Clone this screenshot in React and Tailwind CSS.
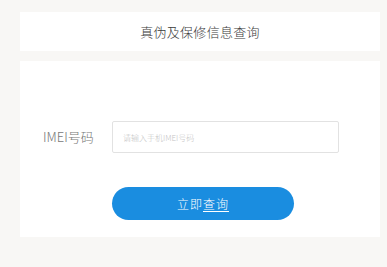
import React, { useState } from 'react';

const App = () => {
    const [imei, setImei] = useState('');

    return (
        <div
            className="w-[387px] h-[267px] bg-[#f8f7f5] pt-[12px] pl-[20px] pr-[7px] font-light"
            style={{ fontFamily: '"Noto Sans CJK SC", "Liberation Sans", sans-serif' }}
        >
            <header className="h-[39px] bg-white flex items-center justify-center">
                <h1 className="text-[13px] text-[#3a3a3a] tracking-[0.3px]">真伪及保修信息查询</h1>
            </header>

            <div className="mt-[10px] h-[176px] bg-white pt-[60px]">
                <div className="flex items-center">
                    <label className="w-[92px] pl-[23px] text-[13px] text-[#777]">IMEI号码</label>
                    <input
                        type="text"
                        placeholder="请输入手机IMEI号码"
                        className="w-[227px] h-[32px] border border-[#e2e2e2] rounded-[2px] px-[10px] text-[8px] text-[#333] placeholder-[#c4c4c4] focus:outline-none"
                        value={imei}
                        onChange={(e) => setImei(e.target.value)}
                    />
                </div>

                <div className="pl-[92px] mt-[34px]">
                    <button className="w-[182px] h-[33px] rounded-full bg-[#1a8de0] text-white text-[12px] tracking-[1px]">
                        立即<span className="underline underline-offset-2">查询</span>
                    </button>
                </div>
            </div>
        </div>
    );
};

export default App;
